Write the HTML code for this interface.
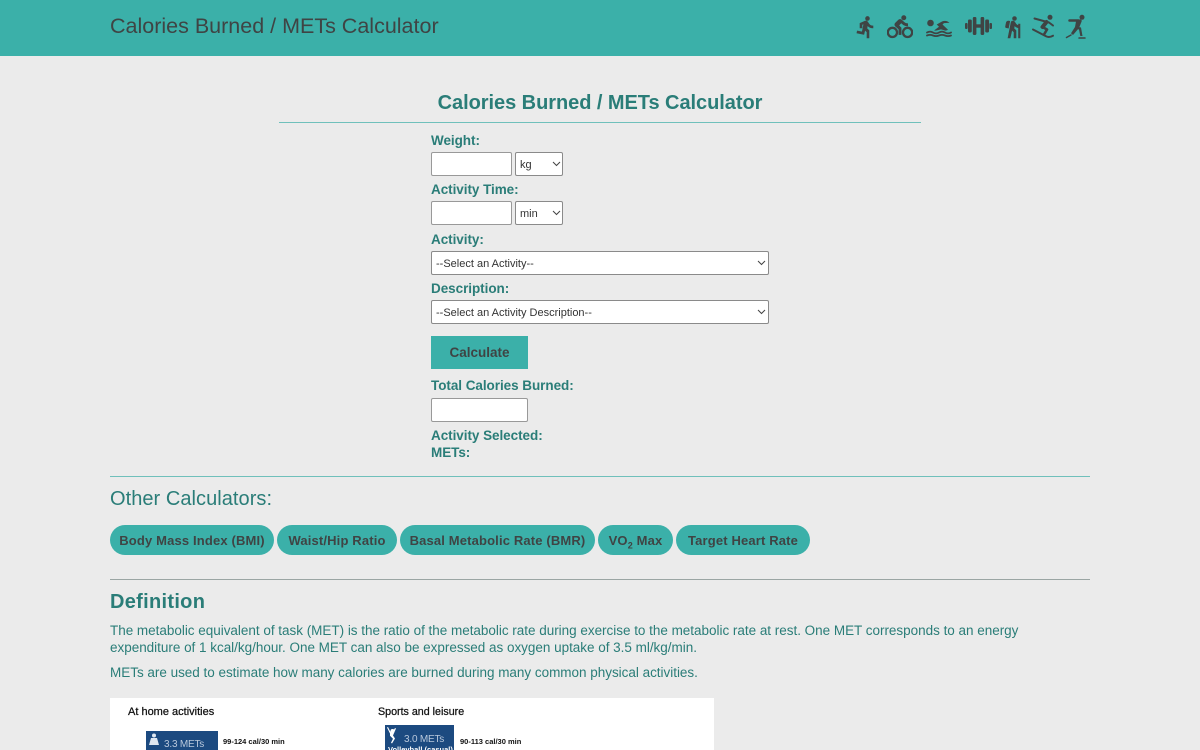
<!DOCTYPE html>
<html lang="en"><head><meta charset="utf-8"><title>Calories Burned / METs Calculator</title>
<style>
html,body{margin:0;padding:0;width:1200px;height:750px;overflow:hidden;background:#ebebeb}
body{position:relative;font-family:"Liberation Sans",sans-serif;color:#2a7d78}
.t{position:absolute;white-space:nowrap;line-height:20px}
.l{font-weight:700;font-size:13.5px;letter-spacing:-.05px;left:431px}
header{position:absolute;left:0;top:0;width:1200px;height:56px;background:#3bb0a9}
svg{position:absolute;fill:#3f4444}
svg.i{stroke:#3f4444;stroke-width:.6}
.k{fill:none;stroke:#3f4444;stroke-linecap:round;stroke-linejoin:round}
.box{position:absolute;box-sizing:border-box;background:#fff;border:1px solid #999;border-radius:2px;padding:0;margin:0;outline:0}
select.box{appearance:none;-webkit-appearance:none;font:11px "Liberation Sans",sans-serif;color:#333;padding:2px 0 0 4px;border-color:#8a8a8a}
.hr{position:absolute;height:1px;background:#6fc0bb}
.pill{position:absolute;top:525px;height:30px;border-radius:15px;background:#3bb0a9;color:#3f4444;font-weight:700;font-size:13px;line-height:31px;text-align:center;white-space:nowrap;letter-spacing:.15px}
sub{font-size:9px;line-height:0}
.chev{fill:none;stroke:#444;stroke-width:1}
.p{font-size:13.5px;letter-spacing:-.02px}
</style></head><body>
<header>
<div class="t" style="left:110px;top:13px;font-size:21.5px;line-height:26px;color:#3f4444">Calories Burned / METs Calculator</div>
<svg class="i" style="left:854px;top:15px" width="24" height="24" viewBox="0 0 24 24"><path d="M13.49 5.48c1.1 0 2-.9 2-2s-.9-2-2-2-2 .9-2 2 .9 2 2 2zm-3.6 13.9l1-4.4 2.1 2v6h2v-7.5l-2.1-2 .6-3c1.3 1.5 3.3 2.5 5.5 2.5v-2c-1.9 0-3.5-1-4.3-2.4l-1-1.6c-.4-.6-1-1-1.7-1-.3 0-.5.1-.8.1l-5.2 2.2v4.7h2v-3.4l1.8-.7-1.6 8.1-4.9-1-.4 2 7 1.4z"/></svg>
<svg class="i" style="left:887px;top:14px" width="26" height="26" viewBox="0 0 24 24"><path d="M15.5 5.5c1.1 0 2-.9 2-2s-.9-2-2-2-2 .9-2 2 .9 2 2 2zM5 12c-2.8 0-5 2.2-5 5s2.2 5 5 5 5-2.2 5-5-2.2-5-5-5zm0 8.5c-1.9 0-3.5-1.6-3.5-3.5s1.6-3.5 3.5-3.5 3.5 1.6 3.5 3.5-1.6 3.5-3.5 3.5zm5.8-10l2.4-2.4.8.8c1.3 1.3 3 2.1 5.1 2.1V9c-1.5 0-2.7-.6-3.6-1.5l-1.9-1.9c-.5-.4-1-.6-1.6-.6s-1.1.2-1.4.6L7.8 8.4c-.4.4-.6.9-.6 1.4 0 .6.2 1.1.6 1.4L11 14v5h2v-6.2l-2.2-2.3zM19 12c-2.8 0-5 2.2-5 5s2.2 5 5 5 5-2.2 5-5-2.2-5-5-5zm0 8.5c-1.9 0-3.5-1.6-3.5-3.5s1.6-3.5 3.5-3.5 3.500 1.600 3.500 3.500-1.600 3.500-3.500 3.500z"/></svg>
<svg style="left:926px;top:14px" width="26" height="26" viewBox="0 0 26 26"><circle cx="4.500" cy="9" r="3.300"/><path d="M8 16.500l5-3.800-2.300-2.200 5.300-3c2.500-1.200 5.500-.8 7.500 1.300l-5.500.3-1.500 1.400 5.500 5.300c-1.500.8-2.700 1-4 .5-1.500-.6-3-1-4.500-.6-1.500.4-3 1.100-5.500.8z"/><path class="k" stroke-width="1.800" d="M1 18.500q3-1.800 6 0t6 0 6 0 6 0M1 21.500q3-1.200 6 0t6 0 6 0 6 0"/></svg>
<svg style="left:965px;top:17px" width="27" height="18" viewBox="0 0 27 18"><rect x="0" y="6" width="2.600" height="6" rx="1"/><rect x="3" y="2.500" width="3.800" height="13" rx="1.200"/><rect x="7.800" y="0" width="3.600" height="18" rx="1.200"/><rect x="15.600" y="0" width="3.600" height="18" rx="1.200"/><rect x="20.200" y="2.500" width="3.800" height="13" rx="1.200"/><rect x="24.400" y="6" width="2.600" height="6" rx="1"/><rect x="10" y="7.300" width="7" height="3.400"/></svg>
<svg class="i" style="left:1001px;top:15px" width="24" height="24" viewBox="0 0 24 24"><path d="M13.500 5.500c1.090 0 2-.9 2-2s-.91-2-2-2-2 .9-2 2 .9 2 2 2zM17.500 10.780c-1.230-.37-2.220-1.170-2.800-2.180l-1-1.600c-.41-.65-1.110-1-1.840-1-.78 0-1.590.5-1.780 1.440S7 23 7 23h2.100l1.800-8 2.100 2v6h2v-7.500l-2.100-2 .6-3c1 1.150 2.410 2.010 4 2.340V23H19V9h-1.500v1.780zM7.430 13.130l-2.120-.41c-.54-.11-.9-.63-.79-1.170l.76-3.930c.21-1.080 1.260-1.790 2.340-1.580l1.160.23-1.350 6.860z"/></svg>
<svg style="left:1031px;top:14px" width="25" height="25" viewBox="0 0 25 25"><circle cx="19" cy="3.300" r="2.500"/><path class="k" stroke-width="2" d="M3.500 4.500L18 8.500l4 3"/><path class="k" stroke-width="4" d="M15.500 8l-4 5"/><path class="k" stroke-width="2.600" d="M11.500 13l4.500 2.500-3 5"/><path class="k" stroke-width="2" d="M2 15.500L15.500 22.500c2 .8 4 .6 6.500-.8"/></svg>
<svg style="left:1064px;top:14px" width="24" height="26" viewBox="0 0 24 26"><circle cx="18" cy="3.300" r="2.500"/><path class="k" stroke-width="2.500" d="M5.500 6.500h9"/><path d="M11 5.500h5.500c1 0 1.500 1 1.100 2L15 14l-6 7-2-1.800 4-6.200 1-5.500z"/><path d="M12.500 12.500l4.500 1 1.500 8.500h-2.200l-1.300-6.500-3-1z"/><path class="k" stroke-width="1.500" d="M2.500 23.500L7 21M15 24h6"/></svg>
</header>

<div class="t" style="left:278px;width:644px;top:90px;text-align:center;font-size:20px;line-height:26px;font-weight:700;letter-spacing:-.05px">Calories Burned / METs Calculator</div>
<div class="hr" style="left:279px;top:122px;width:642px"></div>

<div class="t l" style="top:131px">Weight:</div>
<input class="box" style="left:431px;top:152px;width:81px;height:24px">
<select class="box" style="left:515px;top:152px;width:48px;height:24px"><option>kg</option></select>
<svg style="left:552px;top:161px" width="9" height="6"><path class="chev" d="M1 1l3.500 3.500L8 1"/></svg>

<div class="t l" style="top:180px">Activity Time:</div>
<input class="box" style="left:431px;top:201px;width:81px;height:24px">
<select class="box" style="left:515px;top:201px;width:48px;height:24px"><option>min</option></select>
<svg style="left:552px;top:210px" width="9" height="6"><path class="chev" d="M1 1l3.500 3.500L8 1"/></svg>

<div class="t l" style="top:230px">Activity:</div>
<select class="box" style="left:431px;top:251px;width:338px;height:24px"><option>--Select an Activity--</option></select>
<svg style="left:757px;top:260px" width="9" height="6"><path class="chev" d="M1 1l3.500 3.500L8 1"/></svg>

<div class="t l" style="top:279px">Description:</div>
<select class="box" style="left:431px;top:300px;width:338px;height:24px"><option>--Select an Activity Description--</option></select>
<svg style="left:757px;top:309px" width="9" height="6"><path class="chev" d="M1 1l3.500 3.500L8 1"/></svg>

<div class="t" style="left:431px;top:336px;width:97px;height:33px;line-height:33px;background:#3bb0a9;color:#3f4444;font-weight:700;font-size:13.5px;text-align:center;letter-spacing:0">Calculate</div>

<div class="t l" style="top:376px">Total Calories Burned:</div>
<input class="box" style="left:431px;top:398px;width:97px;height:24px">
<div class="t l" style="top:426px">Activity Selected:</div>
<div class="t l" style="top:443px">METs:</div>

<div class="hr" style="left:110px;top:476px;width:980px"></div>
<div class="t" style="left:110px;top:486px;font-size:20px;line-height:26px;letter-spacing:.05px">Other Calculators:</div>

<div class="pill" style="left:110px;width:164px">Body Mass Index (BMI)</div>
<div class="pill" style="left:277px;width:120px">Waist/Hip Ratio</div>
<div class="pill" style="left:400px;width:195px">Basal Metabolic Rate (BMR)</div>
<div class="pill" style="left:598px;width:75px">VO<sub>2</sub> Max</div>
<div class="pill" style="left:676px;width:134px">Target Heart Rate</div>

<div class="hr" style="left:110px;top:579px;width:980px;background:#9aa5a3"></div>
<div class="t" style="left:110px;top:589px;font-size:20px;line-height:26px;font-weight:700;letter-spacing:.3px">Definition</div>
<div class="t p" style="left:110px;top:621px">The metabolic equivalent of task (MET) is the ratio of the metabolic rate during exercise to the metabolic rate at rest. One MET corresponds to an energy</div>
<div class="t p" style="left:110px;top:638px">expenditure of 1 kcal/kg/hour. One MET can also be expressed as oxygen uptake of 3.5 ml/kg/min.</div>
<div class="t p" style="left:110px;top:663px">METs are used to estimate how many calories are burned during many common physical activities.</div>

<div style="position:absolute;left:110px;top:698px;width:604px;height:52px;background:#fff;overflow:hidden;color:#111">
<div class="t" style="left:18px;top:4px;font-size:11px;-webkit-text-stroke:.25px #111">At home activities</div>
<div class="t" style="left:268px;top:4px;font-size:10.700px;-webkit-text-stroke:.25px #111">Sports and leisure</div>
<div style="position:absolute;left:36px;top:33px;width:72px;height:30px;background:#1c4a80;color:#b9c8dc;font-size:10px;line-height:28px;text-indent:18px;letter-spacing:-.2px">3.3 METs</div>
<svg style="left:37px;top:35px;fill:#dfe7f0" width="15" height="15" viewBox="0 0 15 15"><circle cx="7" cy="2.500" r="2"/><path d="M4 5h6l2 7H2z"/></svg>
<div class="t" style="left:113px;top:38px;font-size:7.500px;line-height:12px;font-weight:700">99-124 cal/30 min</div>
<div style="position:absolute;left:275px;top:27px;width:69px;height:30px;background:#1c4a80;color:#b9c8dc;font-size:10px;line-height:12px">
<span class="t" style="left:19px;top:9px;line-height:12px;letter-spacing:-.2px">3.0 METs</span>
<span class="t" style="left:3px;top:20px;font-size:7.500px;line-height:10px;font-weight:700;color:#fff">Volleyball (casual)</span></div>
<svg style="left:277px;top:29px;fill:#fff" width="13" height="17" viewBox="0 0 13 17"><circle cx="5.500" cy="4" r="2"/><path d="M1 0l2 4 2 2 3-5 1 .5-3 7 2 3-3 5-1-.8 2-4-3-3V6.500L0 .5z"/></svg>
<div class="t" style="left:350px;top:38px;font-size:7.500px;line-height:12px;font-weight:700">90-113 cal/30 min</div>
</div>
</body></html>
